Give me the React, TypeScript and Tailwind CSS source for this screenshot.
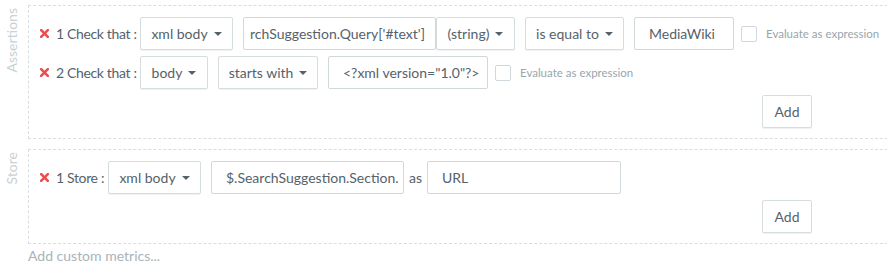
import React from 'react';

const FONT = { fontFamily: 'Lato, "Open Sans", sans-serif' };

const RemoveIcon = () => (
  <svg width="9" height="9" viewBox="0 0 9 9" className="shrink-0">
    <path d="M1.2 1.2 L7.8 7.8 M7.8 1.2 L1.2 7.8" stroke="#e8504f" strokeWidth="2.6" strokeLinecap="square" />
  </svg>
);

const Caret = () => (
  <span className="ml-1.5 inline-block h-0 w-0 border-x-[4px] border-t-[4px] border-x-transparent border-t-[#56626b]" />
);

const Dropdown = ({ label, w }: { label: string; w: string }) => (
  <div className={`${w} h-[33px] shrink-0 flex items-center justify-center whitespace-nowrap rounded-[2px] border border-[#d5dde0] bg-white text-[#56626b] shadow-[0_1px_1px_rgba(0,0,0,0.06)]`}>
    {label}
    <Caret />
  </div>
);

const Input = ({ value, w, end }: { value: string; w: string; end?: boolean }) => (
  <div className={`${w} h-[33px] shrink-0 flex items-center ${end ? 'justify-end pr-[10px]' : 'pl-[14px]'} overflow-hidden whitespace-nowrap rounded-[2px] border border-[#d0d8dc] bg-white text-[#56626b]`}>
    {value}
  </div>
);

const Evaluate = () => (
  <div className="flex items-center gap-[9px] whitespace-nowrap text-[11.5px] text-[#9aa5ac]">
    <span className="h-4 w-4 shrink-0 rounded-[2px] border border-[#d0d8dc] bg-white" />
    Evaluate as expression
  </div>
);

const AddButton = () => (
  <div className="flex pl-[722px]">
    <div className="flex h-[33px] w-[50px] items-center justify-center rounded-[2px] border border-[#d5dde0] bg-white text-[#56626b] shadow-[0_1px_1px_rgba(0,0,0,0.06)]">
      Add
    </div>
  </div>
);

const Section = ({ label, children }: { label: string; children: React.ReactNode }) => (
  <div className="flex">
    <div className="flex w-[28px] shrink-0 justify-center pt-[3px] pr-[4px]">
      <span className="h-fit rotate-180 whitespace-nowrap text-[14px] leading-none text-[#c9d1d5] [writing-mode:vertical-rl]">{label}</span>
    </div>
    <div className="w-[870px] shrink-0 border-y border-l border-dashed border-[#d6dee2] pl-[11px] pt-[11px] pb-[10px]">
      {children}
    </div>
  </div>
);

export default function App() {
  return (
    <div className="overflow-hidden bg-white pt-[5px] text-[14px] leading-none text-[#56626b]" style={FONT}>
      <div className="flex flex-col gap-[10px]">
        <Section label="Assertions">
          <div className="flex flex-col gap-[6px]">
            <div className="flex h-[33px] items-center">
              <RemoveIcon />
              <span className="ml-[7px] w-[84px] shrink-0 whitespace-nowrap tracking-[-0.35px]">1 Check that :</span>
              <div className="flex items-center gap-[10px]">
                <Dropdown label="xml body" w="w-[93px]" />
                <div className="flex">
                  <Input value="rchSuggestion.Query['#text']" w="w-[193px]" end />
                  <Dropdown label="(string)" w="w-[79px]" />
                </div>
                <Dropdown label="is equal to" w="w-[99px]" />
                <Input value="MediaWiki" w="w-[100px]" />
              </div>
              <div className="ml-[7px]"><Evaluate /></div>
            </div>
            <div className="flex h-[33px] items-center">
              <RemoveIcon />
              <span className="ml-[7px] w-[84px] shrink-0 whitespace-nowrap tracking-[-0.35px]">2 Check that :</span>
              <div className="flex items-center gap-[10px]">
                <Dropdown label="body" w="w-[68px]" />
                <Dropdown label="starts with" w="w-[100px]" />
                <Input value={'<?xml version="1.0"?>'} w="w-[160px]" />
              </div>
              <div className="ml-[7px]"><Evaluate /></div>
            </div>
            <AddButton />
          </div>
        </Section>
        <Section label="Store">
          <div className="flex flex-col gap-[6px]">
            <div className="flex h-[33px] items-center">
              <RemoveIcon />
              <span className="ml-[7px] w-[52px] shrink-0 whitespace-nowrap tracking-[-0.35px]">1 Store :</span>
              <div className="flex items-center gap-[10px]">
                <Dropdown label="xml body" w="w-[93px]" />
                <Input value="$.SearchSuggestion.Section." w="w-[193px]" />
              </div>
              <span className="ml-[5px] mr-[5px]">as</span>
              <Input value="URL" w="w-[194px]" />
            </div>
            <AddButton />
          </div>
        </Section>
      </div>
      <div className="pl-[28px] pt-[5px] text-[14px] text-[#a9b3b9]">Add custom metrics...</div>
    </div>
  );
}
